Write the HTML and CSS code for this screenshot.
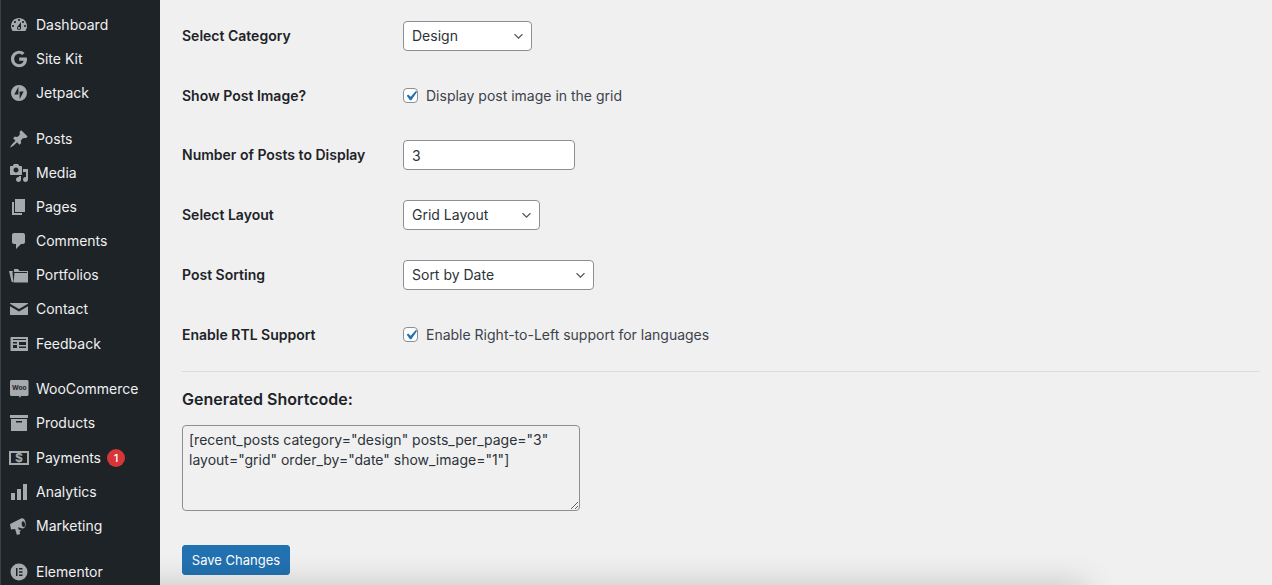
FILE: index.html
```html
<!DOCTYPE html>
<html lang="en">
<head>
<meta charset="utf-8">
<title>Settings</title>
<link rel="stylesheet" href="styles.css">
</head>
<body>
<div class="app">
  <nav class="sidebar">
    <ul class="menu-group">
      <li class="item"><svg class="icon" viewBox="0 0 20 20"><path fill-rule="evenodd" d="M3.76 16h12.48c1.1-1.37 1.76-3.11 1.76-5 0-4.42-3.58-8-8-8s-8 3.58-8 8c0 1.89.66 3.63 1.76 5zM10 4c.55 0 1 .45 1 1s-.45 1-1 1-1-.45-1-1 .45-1 1-1zM6 6c.55 0 1 .45 1 1s-.45 1-1 1-1-.45-1-1 .45-1 1-1zm8 0c.55 0 1 .45 1 1s-.45 1-1 1-1-.45-1-1 .45-1 1-1zm-5.37 5.55L12 7v6c0 1.1-.9 2-2 2s-2-.9-2-2c0-.57.24-1.08.63-1.45zM4 10c.55 0 1 .45 1 1s-.45 1-1 1-1-.45-1-1 .45-1 1-1zm12 0c.55 0 1 .45 1 1s-.45 1-1 1-1-.45-1-1 .45-1 1-1zm-5 3c0-.55-.45-1-1-1s-1 .45-1 1 .45 1 1 1 1-.45 1-1z"/></svg><span>Dashboard</span></li>
      <li class="item"><svg class="icon" viewBox="0 0 20 20"><path d="M10.2 8.6h7.6c.1.5.2 1 .2 1.6 0 4.8-3.2 8-7.9 8C5.5 18.200 2 14.500 2 10s3.500-8.200 8.100-8.200c2.200 0 4 .8 5.400 2.100l-2.300 2.200c-.6-.6-1.600-1.300-3.100-1.300-2.700 0-4.900 2.300-4.900 5.200s2.200 5.200 4.900 5.200c3.100 0 4.300-2.200 4.500-3.400h-4.400z"/></svg><span>Site Kit</span></li>
      <li class="item"><svg class="icon" viewBox="0 0 20 20"><path fill-rule="evenodd" d="M10 2a8 8 0 1 0 0 16 8 8 0 0 0 0-16zM9.400 3.800v7.700H5.300zM10.600 16.200V8.500h4.100z"/></svg><span>Jetpack</span></li>
    </ul>
    <ul class="menu-group">
      <li class="item"><svg class="icon" viewBox="0 0 20 20"><path d="M10.440 3.020l1.820-1.820 6.360 6.350-1.830 1.820c-1.050-.68-2.480-.57-3.410.36l-.75.75c-.92.93-1.040 2.350-.35 3.410l-1.830 1.820-2.410-2.410-2.800 2.790c-.42.42-3.380 2.710-3.800 2.290s1.860-3.390 2.280-3.810l2.790-2.790L4.100 9.360l1.830-1.820c1.050.69 2.480.57 3.400-.36l.75-.75c.93-.92 1.050-2.350.36-3.410z"/></svg><span>Posts</span></li>
      <li class="item"><svg class="icon" viewBox="0 0 20 20"><path fill-rule="evenodd" d="M13 11V4c0-.55-.45-1-1-1h-1.670L9 1H5L3.670 3H2c-.55 0-1 .45-1 1v7c0 .55.45 1 1 1h10c.55 0 1-.45 1-1zM7 4.500c1.380 0 2.500 1.120 2.500 2.500S8.380 9.500 7 9.500 4.500 8.380 4.500 7 5.620 4.500 7 4.500zM14 6h5v10.500c0 1.380-1.120 2.500-2.500 2.500S14 17.880 14 16.500s1.120-2.500 2.500-2.500c.17 0 .34.02.5.05V9h-3V6zm-4 8.050V13h2v3.500c0 1.380-1.120 2.500-2.500 2.500S7 17.880 7 16.500 8.120 14 9.500 14c.17 0 .34.02.5.05z"/></svg><span>Media</span></li>
      <li class="item"><svg class="icon" viewBox="0 0 20 20"><path d="M6 15V2h10v13H6zm-1 1h8v2H3V5h2v11z"/></svg><span>Pages</span></li>
      <li class="item"><svg class="icon" viewBox="0 0 20 20"><path d="M5 2h9c1.100 0 2 .9 2 2v7c0 1.100-.9 2-2 2h-2l-5 5v-5H5c-1.100 0-2-.9-2-2V4c0-1.100.9-2 2-2z"/></svg><span>Comments</span></li>
      <li class="item"><svg class="icon" viewBox="0 0 20 20"><path d="M5 4h4l1.500 2H19v11.500H4.500L5.500 8H18V7H5zM0 6h4l-.5 1.200L4.300 17H2.700z"/></svg><span>Portfolios</span></li>
      <li class="item"><svg class="icon" viewBox="0 0 20 20"><path d="M1.500 4h17c.3 0 .5.2.5.5v.3l-9 5.200-9-5.200v-.3c0-.3.2-.5.5-.5zM1 7.200l9 5.300 9-5.300v8.300c0 .3-.2.5-.5.5h-17c-.3 0-.5-.2-.5-.5z"/></svg><span>Contact</span></li>
      <li class="item"><svg class="icon" viewBox="0 0 20 20"><path fill-rule="evenodd" d="M2 3h16.500c.3 0 .5.2.5.5v13c0 .3-.2.500-.5.500H2c-.3 0-.5-.2-.5-.5v-13c0-.3.2-.5.500-.5zM4 8v1.500h4V8zM10 8v3h7V8zM4 11v3h4v-3zM10 12.500V14h7v-1.500zM4 5v1h13V5z"/></svg><span>Feedback</span></li>
    </ul>
    <ul class="menu-group">
      <li class="item"><svg class="icon" viewBox="0 0 20 20"><path d="M2.500 1h15.500c1 0 1.500.6 1.500 1.500v13c0 .9-.6 1.500-1.500 1.500h-6l-1.200 2-.8-2H2.500C1.500 17 1 16.400 1 15.500v-13C1 1.600 1.600 1 2.500 1z"/><text class="woo-mark" x="10.200" y="11.200" text-anchor="middle">Woo</text></svg><span>WooCommerce</span></li>
      <li class="item"><svg class="icon" viewBox="0 0 20 20"><path fill-rule="evenodd" d="M1 2h18v3H1zM2 6h16v12H2zM7 8v1.500h6V8z"/></svg><span>Products</span></li>
      <li class="item"><svg class="icon" viewBox="0 0 20 20"><path fill-rule="evenodd" d="M0 3h20v14H0zM2 5v10h16V5z"/><text class="pay-mark" x="10" y="13.900" text-anchor="middle">$</text></svg><span>Payments</span><b class="badge">1</b></li>
      <li class="item"><svg class="icon" viewBox="0 0 20 20"><path d="M2 11h4v7H2zM8 7h4v11H8zM14 2h4v16h-4z"/></svg><span>Analytics</span></li>
      <li class="item"><svg class="icon" viewBox="0 0 20 20"><path fill-rule="evenodd" d="M1 8l11-5.500c1.500-.6 3-.2 4 2 1 2.600 1 5.200-.4 7-.8 1-2 1.200-3.100.7L9 11.200l.9 2.700 1.300-.4.6 1.600-1.300.4.700 2.500-3.300 1-1.800-6L2 13.500zM13.800 5.200c-1 .2-1.400 1.800-1 3.500s1.400 2.700 2.300 2.300c.9-.4 1.200-1.900.8-3.500s-1.300-2.500-2.100-2.300z"/></svg><span>Marketing</span></li>
    </ul>
    <ul class="menu-group">
      <li class="item"><svg class="icon" viewBox="0 0 20 20"><path fill-rule="evenodd" d="M10 1.500a8.500 8.500 0 1 0 0 17 8.500 8.500 0 0 0 0-17zM7 6h1.500v8H7zM10 6h3.500v1.600H10zM10 9.200h3.500v1.600H10zM10 12.400h3.500V14H10z"/></svg><span>Elementor</span></li>
    </ul>
  </nav>
  <main class="content">
    <form class="settings">
      <div class="field">
        <label class="field-label" for="cat">Select Category</label>
        <div class="select-wrap select-category">
          <select id="cat" class="control"><option>Design</option></select>
          <svg class="chevron" viewBox="0 0 20 20"><path d="M5 6l5 5 5-5 2 1-7 7-7-7z"/></svg>
        </div>
      </div>
      <div class="field">
        <span class="field-label">Show Post Image?</span>
        <label class="check">
          <span class="check-box"><input type="checkbox" checked><svg class="tick" viewBox="0 0 20 20"><path d="M14.830 4.890l1.340.94-5.810 8.380H9.020L5.780 9.670l1.340-1.250 2.570 2.400z"/></svg></span>
          Display post image in the grid
        </label>
      </div>
      <div class="field">
        <label class="field-label" for="num">Number of Posts to Display</label>
        <input id="num" class="control number" type="text" value="3">
      </div>
      <div class="field">
        <label class="field-label" for="lay">Select Layout</label>
        <div class="select-wrap select-layout">
          <select id="lay" class="control"><option>Grid Layout</option></select>
          <svg class="chevron" viewBox="0 0 20 20"><path d="M5 6l5 5 5-5 2 1-7 7-7-7z"/></svg>
        </div>
      </div>
      <div class="field">
        <label class="field-label" for="sort">Post Sorting</label>
        <div class="select-wrap select-sort">
          <select id="sort" class="control"><option>Sort by Date</option></select>
          <svg class="chevron" viewBox="0 0 20 20"><path d="M5 6l5 5 5-5 2 1-7 7-7-7z"/></svg>
        </div>
      </div>
      <div class="field">
        <span class="field-label">Enable RTL Support</span>
        <label class="check">
          <span class="check-box"><input type="checkbox" checked><svg class="tick" viewBox="0 0 20 20"><path d="M14.830 4.890l1.340.94-5.810 8.380H9.020L5.780 9.670l1.340-1.250 2.570 2.400z"/></svg></span>
          Enable Right-to-Left support for languages
        </label>
      </div>
      <hr class="divider">
      <h3 class="shortcode-title">Generated Shortcode:</h3>
      <textarea class="shortcode" readonly>[recent_posts category="design" posts_per_page="3" layout="grid" order_by="date" show_image="1"]</textarea>
      <button class="save" type="button">Save Changes</button>
    </form>
  </main>
  <div class="edge-shadow"></div>
</div>
</body>
</html>
```
FILE: styles.css
```css
* { box-sizing: border-box; }
html, body { margin: 0; height: 585px; overflow: hidden; }
body {
  background: #f0f0f1;
  color: #3c434a;
  font: 14px/20px Inter, "Liberation Sans", sans-serif;
}
.app { position: relative; display: flex; height: 585px; overflow: hidden; }

.sidebar {
  position: relative;
  z-index: 2;
  flex: 0 0 160px;
  padding-top: 8px;
  background: #1d2327;
  border-left: 1px solid #3a4046;
}
.menu-group { list-style: none; margin: 0 0 11.700px; padding: 0; }
.item {
  display: flex;
  align-items: center;
  height: 34.100px;
  padding-left: 8px;
  color: #f0f0f1;
  font-size: 14px;
}
.icon { flex: none; width: 20px; height: 20px; margin-right: 7px; fill: #a7aaad; }
.woo-mark { font: 700 6.500px Inter, sans-serif; fill: #1d2327; }
.pay-mark { font: 700 12px Inter, sans-serif; fill: #a7aaad; }
.badge {
  display: flex;
  align-items: center;
  justify-content: center;
  width: 18px;
  height: 18px;
  margin-left: 6px;
  border-radius: 50%;
  background: #d63638;
  color: #fff;
  font-size: 11px;
  font-weight: 500;
}

.content { flex: 1; min-width: 0; padding: 6px 12px 0 22px; }
.settings { display: flex; flex-direction: column; align-items: flex-start; }
.field {
  display: grid;
  grid-template-columns: 221px 1fr;
  align-items: center;
  width: 100%;
  height: 59.800px;
}
.field-label { font-weight: 600; color: #1d2327; }
.control {
  height: 30px;
  margin: 0;
  padding: 0 8px;
  border: 1px solid #8c8f94;
  border-radius: 4px;
  color: #2c3338;
  font: 14px/20px Inter, sans-serif;
}
select.control { appearance: none; width: 100%; background: #fff; }
.select-wrap { position: relative; display: flex; }
.select-category { width: 129px; }
.select-layout { width: 137px; }
.select-sort { width: 191px; }
.chevron { position: absolute; top: 9px; right: 7px; width: 13px; height: 13px; fill: #50575e; }
.number { width: 172px; background: #fff; }
.check { display: flex; align-items: center; gap: 8px; }
.check-box { position: relative; display: flex; width: 15px; height: 15px; }
.check-box input {
  appearance: none;
  width: 15px;
  height: 15px;
  margin: 0;
  border: 1px solid #8c8f94;
  border-radius: 4px;
  background: #fff;
}
.tick { position: absolute; top: -2.500px; left: -2.500px; width: 20px; height: 20px; fill: #2271b1; }

.divider { width: 100%; height: 1px; margin: 6px 0 0; border: 0; background: #dcdcde; }
.shortcode-title { margin: 17px 0 0; font-size: 16px; font-weight: 600; line-height: 20px; color: #1d2327; }
.shortcode {
  display: block;
  width: 398px;
  height: 86px;
  margin-top: 16px;
  padding: 4px 6px;
  border: 1px solid #8c8f94;
  border-radius: 4px;
  background: #f0f0f1;
  color: #2c3338;
  font: 14px/20px Inter, sans-serif;
}
.save {
  width: 108px;
  height: 30px;
  margin-top: 34px;
  padding: 0;
  border: 1px solid #2271b1;
  border-radius: 3px;
  background: #2271b1;
  color: #fff;
  font: 13px/20px Inter, sans-serif;
}
.edge-shadow {
  position: absolute;
  z-index: 1;
  left: 130px;
  width: 950px;
  top: 592px;
  height: 40px;
  box-shadow: 0 0 34px 6px rgba(0, 0, 0, .2);
  pointer-events: none;
}
```
